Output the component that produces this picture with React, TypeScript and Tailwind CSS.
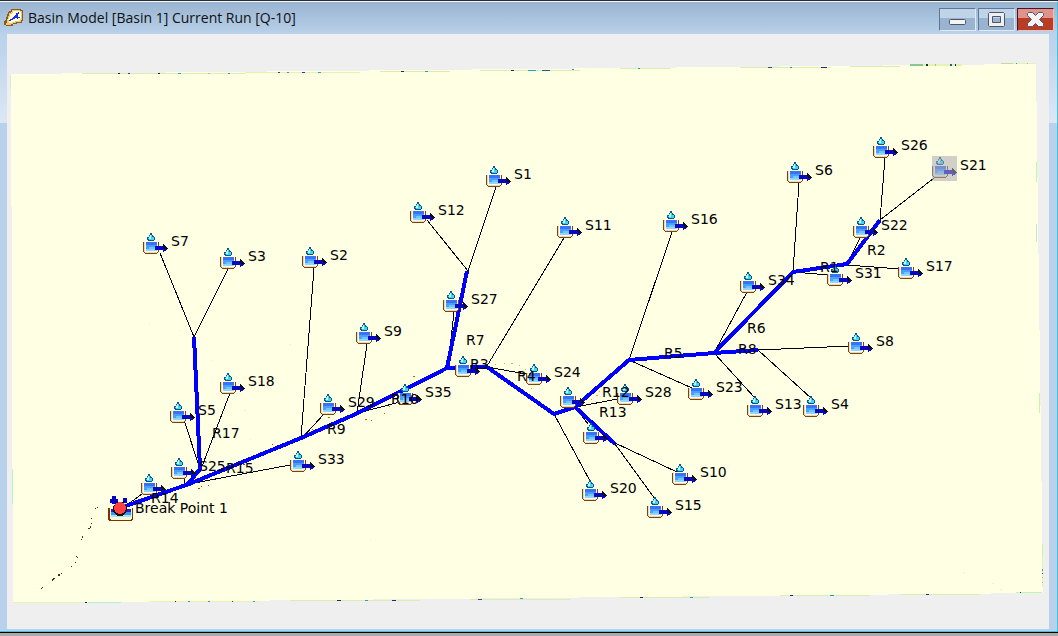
type Point = [number, number];

interface Basin {
  label?: string;
  x: number;
  y: number;
  selected?: boolean;
}

// x / y is the top left corner of the icon in window coordinates
const BASINS: Basin[] = [
  { label: 'S7', x: 143, y: 232 },
  { label: 'S3', x: 220, y: 247 },
  { label: 'S2', x: 302, y: 246 },
  { label: 'S9', x: 356, y: 322 },
  { label: 'S18', x: 220, y: 372 },
  { label: 'S5', x: 170, y: 401 },
  { label: 'S29', x: 320, y: 393 },
  { label: 'S35', x: 397, y: 383 },
  { label: 'S33', x: 290, y: 450 },
  { label: 'S25', x: 171, y: 457 },
  { x: 141, y: 473 },
  { label: 'S12', x: 410, y: 201 },
  { label: 'S1', x: 486, y: 165 },
  { label: 'S11', x: 557, y: 216 },
  { label: 'S27', x: 443, y: 290 },
  { x: 455, y: 355 },
  { label: 'S24', x: 526, y: 363 },
  { x: 560, y: 386 },
  { label: 'S28', x: 617, y: 383 },
  { x: 583, y: 422 },
  { label: 'S20', x: 582, y: 479 },
  { label: 'S15', x: 647, y: 496 },
  { label: 'S10', x: 672, y: 463 },
  { label: 'S23', x: 688, y: 378 },
  { label: 'S16', x: 663, y: 210 },
  { label: 'S34', x: 740, y: 271 },
  { label: 'S13', x: 747, y: 395 },
  { label: 'S4', x: 803, y: 395 },
  { label: 'S8', x: 848, y: 332 },
  { label: 'S6', x: 787, y: 161 },
  { label: 'S26', x: 873, y: 136 },
  { label: 'S21', x: 932, y: 156, selected: true },
  { label: 'S22', x: 853, y: 216 },
  { label: 'S17', x: 898, y: 257 },
  { label: 'S31', x: 827, y: 264 },
];

const REACH_LABELS: { label: string; x: number; y: number }[] = [
  { label: 'R17', x: 212, y: 438 },
  { label: 'R9', x: 327, y: 434 },
  { label: 'R15', x: 226, y: 473 },
  { label: 'R10', x: 391, y: 404 },
  { label: 'R7', x: 466, y: 345 },
  { label: 'R3', x: 470, y: 369 },
  { label: 'R4', x: 517, y: 381 },
  { label: 'R12', x: 602, y: 397 },
  { label: 'R13', x: 599, y: 417 },
  { label: 'R5', x: 664, y: 358 },
  { label: 'R6', x: 747, y: 333 },
  { label: 'R8', x: 738, y: 354 },
  { label: 'R1', x: 820, y: 272 },
  { label: 'R2', x: 867, y: 255 },
  { label: 'R14', x: 151, y: 503 },
  { label: 'Break Point 1', x: 135, y: 513 },
];

const REACHES: Point[][] = [
  [[120, 508], [189, 484], [301, 438], [358, 413], [447, 368], [487, 367], [554, 414], [575, 407], [629, 360], [714, 353], [793, 272], [847, 264], [880, 220]],
  [[194, 337], [200, 469], [187, 485]],
  [[467, 271], [447, 368]],
  [[714, 353], [758, 350]],
  [[575, 407], [615, 444]],
];

const LINKS: [Point, Point][] = [
  [[160, 253], [194, 337]],
  [[228, 269], [194, 337]],
  [[230, 393], [201, 469]],
  [[184, 420], [200, 469]],
  [[184, 479], [184, 486]],
  [[290, 465], [189, 484]],
  [[314, 268], [301, 438]],
  [[324, 414], [302, 438]],
  [[367, 344], [357, 413]],
  [[400, 402], [358, 413]],
  [[427, 220], [468, 271]],
  [[496, 187], [468, 271]],
  [[564, 238], [487, 366]],
  [[454, 312], [448, 367]],
  [[526, 374], [487, 367]],
  [[617, 399], [576, 407]],
  [[590, 481], [554, 414]],
  [[588, 424], [576, 408]],
  [[655, 499], [615, 444]],
  [[677, 472], [615, 443]],
  [[672, 232], [629, 360]],
  [[692, 388], [629, 360]],
  [[747, 292], [714, 353]],
  [[755, 398], [714, 353]],
  [[811, 398], [758, 350]],
  [[850, 346], [758, 350]],
  [[799, 183], [793, 272]],
  [[885, 158], [880, 220]],
  [[934, 178], [880, 220]],
  [[860, 238], [847, 264]],
  [[900, 269], [847, 265]],
  [[829, 275], [793, 272]],
  [[142, 494], [124, 507]],
];

// stray cells of the terrain raster: x, y, width, colour
const SPECKS: [number, number, number, string][] = [
  [97, 507, 1, '#5a2800'], [95, 508, 1, '#5a2800'], [91, 518, 1, '#5a2800'], [91, 523, 1, '#5a2800'],
  [90, 527, 1, '#5a2800'], [88, 528, 2, '#5a2800'], [82, 536, 1, '#5a2800'], [81, 539, 1, '#5a2800'],
  [76, 556, 1, '#5a2800'], [77, 557, 1, '#5a2800'], [75, 562, 1, '#5a2800'], [71, 566, 1, '#5a2800'],
  [58, 574, 2, '#5a2800'], [58, 575, 2, '#5a2800'], [61, 573, 1, '#5a2800'], [53, 578, 2, '#5a2800'],
  [52, 579, 2, '#5a2800'], [52, 580, 1, '#5a2800'], [82, 537, 1, '#5a2800'], [90, 526, 1, '#5a2800'],
  [42, 587, 1, '#5a2800'], [41, 588, 1, '#5a2800'], [198, 488, 2, '#a04000'], [201, 486, 1, '#a04000'],
  [243, 464, 2, '#a04000'], [208, 485, 1, '#a04000'], [272, 444, 1, '#b85000'], [365, 419, 2, '#c86000'],
  [371, 420, 1, '#c86000'], [384, 413, 1, '#c86000'], [389, 406, 1, '#c86000'], [413, 376, 2, '#c86000'],
  [312, 429, 1, '#c86000'], [328, 417, 2, '#c86000'], [495, 364, 1, '#f0a030'], [504, 363, 1, '#f0a030'],
  [511, 363, 2, '#f0a030'], [519, 365, 1, '#f0a030'], [525, 369, 1, '#f0a030'], [531, 388, 1, '#f0a030'],
  [591, 399, 1, '#f0a030'], [596, 395, 2, '#f0a030'], [600, 387, 1, '#f0a030'], [599, 391, 1, '#f0a030'],
  [645, 362, 2, '#ffd890'], [653, 363, 1, '#ffd890'], [149, 324, 1, '#ffecb8'], [180, 330, 1, '#ffecb8'],
  [212, 360, 1, '#ffecb8'], [289, 344, 2, '#ffecb8'], [244, 410, 2, '#ffecb8'], [250, 439, 1, '#ffecb8'],
  [963, 572, 2, '#ffecb8'], [992, 583, 2, '#ffecb8'], [1000, 589, 2, '#ffecb8'], [370, 540, 1, '#ffecb8'],
];

// coloured cells along the raster border: x, y, width, height, colour
const EDGES: [number, number, number, number, string][] = [
  [82, 73, 163, 1, '#dcedb4'], [118, 73, 2, 1, '#101858'], [128, 73, 2, 1, '#2040a0'], [158, 73, 2, 1, '#101858'],
  [178, 73, 3, 1, '#28a8c8'], [208, 73, 2, 1, '#88d0b8'], [228, 73, 2, 1, '#28a0c0'], [245, 72, 115, 1, '#e4f4b0'],
  [278, 72, 2, 1, '#2040a0'], [287, 72, 2, 1, '#28a0c0'], [302, 72, 3, 1, '#2040a0'], [318, 72, 3, 1, '#28a8c8'],
  [380, 71, 70, 1, '#dcedb4'], [401, 71, 3, 1, '#1c2c70'], [425, 71, 3, 1, '#28a0c0'], [480, 70, 100, 1, '#dcedb4'],
  [511, 70, 3, 1, '#1c2c70'], [528, 70, 8, 1, '#28a0c0'], [542, 70, 8, 1, '#1c6080'], [572, 69, 2, 1, '#28a0c0'],
  [620, 68, 50, 1, '#dcedb4'], [638, 68, 2, 1, '#28a0c0'], [740, 67, 90, 1, '#dcedb4'], [768, 67, 4, 1, '#285878'],
  [790, 67, 2, 1, '#28a0c0'], [821, 67, 6, 1, '#1c2c70'], [850, 66, 50, 1, '#dcedb4'],
  [910, 64, 13, 2, '#88c890'], [923, 64, 39, 2, '#e4f4b0'], [926, 64, 2, 2, '#103048'], [935, 64, 1, 2, '#88d0a0'],
  [950, 64, 2, 2, '#2060a0'], [955, 64, 1, 2, '#103048'], [1001, 63, 12, 1, '#c0dca0'], [1013, 63, 22, 1, '#e4f4b0'],
  [1016, 63, 1, 1, '#28a0c0'], [1027, 63, 1, 1, '#88d0b8'],
  [13, 602, 70, 1, '#e4f4b0'], [85, 602, 2, 1, '#101858'], [88, 602, 33, 1, '#b0f0e0'], [150, 601, 110, 1, '#e4f4b0'],
  [175, 601, 1, 1, '#101858'], [188, 601, 2, 1, '#28a0c0'], [208, 601, 2, 1, '#28a0c0'], [232, 601, 1, 1, '#2040a0'],
  [253, 601, 2, 1, '#28a0c0'], [290, 600, 130, 1, '#dcedb4'], [337, 600, 4, 1, '#1c2c70'], [365, 600, 3, 1, '#28a0c0'],
  [392, 600, 4, 1, '#1c2c70'], [470, 599, 100, 1, '#dcedb4'], [478, 599, 4, 1, '#285878'], [520, 598, 3, 1, '#28a0c0'],
  [620, 597, 90, 1, '#dcedb4'], [640, 597, 3, 1, '#1c2c70'], [690, 597, 3, 1, '#28a0c0'], [780, 595, 90, 1, '#dcedb4'],
  [790, 595, 3, 1, '#1c2c70'], [830, 595, 4, 1, '#28a0c0'], [900, 594, 80, 1, '#dcedb4'], [926, 594, 3, 1, '#1c2c70'],
  [1016, 592, 26, 1, '#c0f8a8'], [1020, 592, 1, 1, '#2040a0'],
  [1042, 544, 1, 13, '#c0f8a8'], [1042, 557, 1, 30, '#e4f4b0'], [1042, 569, 1, 2, '#28a0c0'], [1042, 573, 1, 1, '#2040a0'],
  [1042, 577, 1, 1, '#88d0a0'], [1042, 582, 1, 1, '#88d0a0'], [12, 469, 1, 35, '#b8f0d8'], [10, 75, 1, 14, '#d0f0d0'],
  [1036, 162, 1, 20, '#c0f8a8'], [1036, 224, 1, 18, '#c0e8d0'], [1039, 393, 1, 20, '#c0f8a8'],
];

const toPoints = (points: Point[]) => points.map((p) => p.join(',')).join(' ');

function BasinIcon({ x, y, selected }: Basin) {
  return (
    <g transform={`translate(${x} ${y})`}>
      {/* water drop */}
      <path d="M8 1h1v2h1v1h1v1h1v3h-1v1H5V8H4V5h2V3h1V1z" fill="#07588f" />
      <path d="M7 3h2v2h2v3H6V7H5V6h1V4h1z" fill="#41d8ee" />
      <path d="M7 3h1v4H6V5h1z" fill="#c8fbff" />
      {/* container */}
      <path d="M1 10h14v11H1z" fill="#fffbe8" />
      <path d="M0 10h1v10H0zM1 20h1v1H1zM2 21h12v1H2zM15 10h1v10h-1zM14 20h1v1h-1z" fill="#7a4310" />
      <path d="M1 10h1v10H1zM2 20h12v1H2z" fill="#f0d8b0" />
      <path d="M3 10h11v3H3z" fill="#3972f6" />
      <path d="M3 13h11v4H3z" fill="#46a0ff" />
      <path d="M6 15h8v2H6z" fill="#70c5ff" />
      <path d="M3 17h11v2H3z" fill="#8fd6ff" />
      {/* outflow arrow */}
      <path d="M12 14h8v-2h1v1h1v1h1v1h1v1h1v1h-1v1h-1v1h-2v1h-1v-2h-8z" fill="#0808c0" />
      <path d="M20 12h1v1h1v1h1v1h1v1h1v1h-4v-2h-1z" fill="#101010" />
      {selected && <path d="M0 0h25v25H0z" fill="#a9a9b5" fillOpacity="0.55" />}
    </g>
  );
}

function BreakPointIcon() {
  return (
    <g>
      <path d="M109 508h23v12h-23z" fill="#fff6d8" />
      <path d="M108 508h2v11h1v1h20v-1h1v-11h1v12h-1v1h-23v-1h-1z" fill="#7a3400" />
      <path d="M111 509h20v4h-20z" fill="#2020c8" />
      <path d="M111 512h20v3h-20z" fill="#3898f8" />
      <path d="M111 515h20v2h-20z" fill="#a0e8f8" />
      <path d="M112 496h4v3h2v4h-2v1h-4v-1h-2v-4h2zM123 498h4v5h-4z" fill="#0000c0" />
      <circle cx="120" cy="509" r="7" fill="#101010" />
      <circle cx="120" cy="508" r="6" fill="#ff4040" />
    </g>
  );
}

function BasinMap() {
  return (
    <svg
      className="absolute inset-0 size-full font-['DejaVu_Sans',sans-serif] text-sm"
      shapeRendering="crispEdges"
      role="img"
      aria-label="Basin map"
    >
      <g transform="translate(-7 -34)">
        <polygon points="11,74 1036,64 1043,593 13,603" fill="#ffffe3" />
        {EDGES.map(([x, y, w, h, fill], i) => (
          <rect key={i} x={x} y={y} width={w} height={h} fill={fill} />
        ))}
        {SPECKS.map(([x, y, w, fill], i) => (
          <rect key={i} x={x} y={y} width={w} height="1" fill={fill} />
        ))}
        {LINKS.map(([a, b], i) => (
          <line key={i} x1={a[0]} y1={a[1]} x2={b[0]} y2={b[1]} stroke="#000" />
        ))}
        {REACHES.map((points, i) => (
          <polyline key={i} points={toPoints(points)} fill="none" stroke="#0000ff" strokeWidth="4" />
        ))}
        {BASINS.map((basin, i) => (
          <BasinIcon key={i} {...basin} />
        ))}
        <BreakPointIcon />
        {BASINS.map((basin, i) => basin.label && (
          <text key={i} x={basin.x + 28} y={basin.y + 14}>{basin.label}</text>
        ))}
        {REACH_LABELS.map(({ label, x, y }) => (
          <text key={label} x={x} y={y}>{label}</text>
        ))}
      </g>
    </svg>
  );
}

function AppIcon() {
  return (
    <svg className="h-5 w-5 shrink-0" viewBox="0 0 20 20" shapeRendering="crispEdges" aria-hidden="true">
      <path d="M7 1h10v1h2v11h-1v2h-5v1h-4v2H2v-1H0v-4h1v-1h1v-3h1V6h1V4h1V3h2z" fill="#8a5a18" />
      <path d="M8 2h8v1h2v9h-1v2h-5v1H9v1H7v1H2v-2h1v-4h1V8h1V5h2V4h1z" fill="#f0c878" />
      <path d="M9 3h7v1h1v7h-1v2h-5v1H8v1H5v-3H4v-1h1V9h1V6h2V5h1z" fill="#fffbe0" />
      <path d="M14 4h1v2h-1v3h2v1h-2v1h-1v-1h-2v1H9v1H7v1H5v-1h1v-1h2v-1h1V9h1V8h1V7h1V5h2z" fill="#1830e8" />
    </svg>
  );
}

const BUTTON = 'grid h-[23px] w-[37px] place-items-center border border-t-[#5f7794] border-l-[#5f7794] border-r-[#dfeaf5] border-b-[#dfeaf5]';

function WindowButtons() {
  return (
    <div className="flex gap-0.5 self-start pt-1.5">
      <button aria-label="Minimize" className={`${BUTTON} bg-linear-to-b from-[#bfd3e9] from-45% to-[#99b3d0] to-45%`}>
        <svg className="mt-1 h-1.5 w-[17px]" viewBox="0 0 17 6">
          <rect x="0.5" y="0.5" width="16" height="5" rx="1" fill="#f4f4f4" stroke="#505468" />
        </svg>
      </button>
      <button aria-label="Maximize" className={`${BUTTON} bg-linear-to-b from-[#bfd3e9] from-45% to-[#99b3d0] to-45%`}>
        <svg className="h-[15px] w-[17px]" viewBox="0 0 17 15">
          <path d="M1.5 .5h14l1 1v12l-1 1h-14l-1-1v-12zM4.5 4.5v6h8v-6z" fill="#f0f0f0" fillRule="evenodd" stroke="#505468" />
        </svg>
      </button>
      <button
        aria-label="Close"
        className="grid h-[23px] w-[37px] place-items-center border border-t-[#4a1520] border-r-[#f0c0b8] border-b-[#f0c0b8] border-l-[#4a1520] bg-linear-to-b from-[#e0938a] from-45% to-[#bb3c24] to-45%"
      >
        <svg className="h-[15px] w-[17px]" viewBox="0 0 17 15">
          <path d="M1.5.5h4l3 3 3-3h4l1 1v2l-4 4 4 4v2l-1 1h-4l-3-3-3 3h-4l-1-1v-2l4-4-4-4v-2z" fill="#f4f4f4" stroke="#505468" />
        </svg>
      </button>
    </div>
  );
}

export default function App() {
  return (
    <div className="flex min-h-screen flex-col bg-[#aaaaaa] pb-[3px]">
      <div className="flex flex-1 flex-col border-t border-b border-t-[#2b2b33] border-b-black">
        <div className="flex flex-1 flex-col border-t border-r border-b border-t-[#f2f7fc] border-r-[#3fc4e4] border-b-[#3fc4e4] bg-[#b9d1ea]">
          <header className="flex h-8 items-center bg-linear-to-b from-[#99b4d1] to-[#b9d1ea] pr-[3px] pl-1">
            <AppIcon />
            <h1 className="ml-1 flex-1 truncate font-['Open_Sans',sans-serif] text-sm text-[#101010]">
              Basin Model [Basin 1] Current Run [Q-10]
            </h1>
            <WindowButtons />
          </header>
          <div className="flex flex-1 bg-linear-to-b from-[#b9d1ea] to-[#dce8f5] bg-[length:100%_89px] bg-no-repeat pr-2 pb-0.5 pl-[7px]">
            <main className="relative flex-1 overflow-hidden bg-[#efefef]">
              <BasinMap />
            </main>
          </div>
        </div>
      </div>
    </div>
  );
}
